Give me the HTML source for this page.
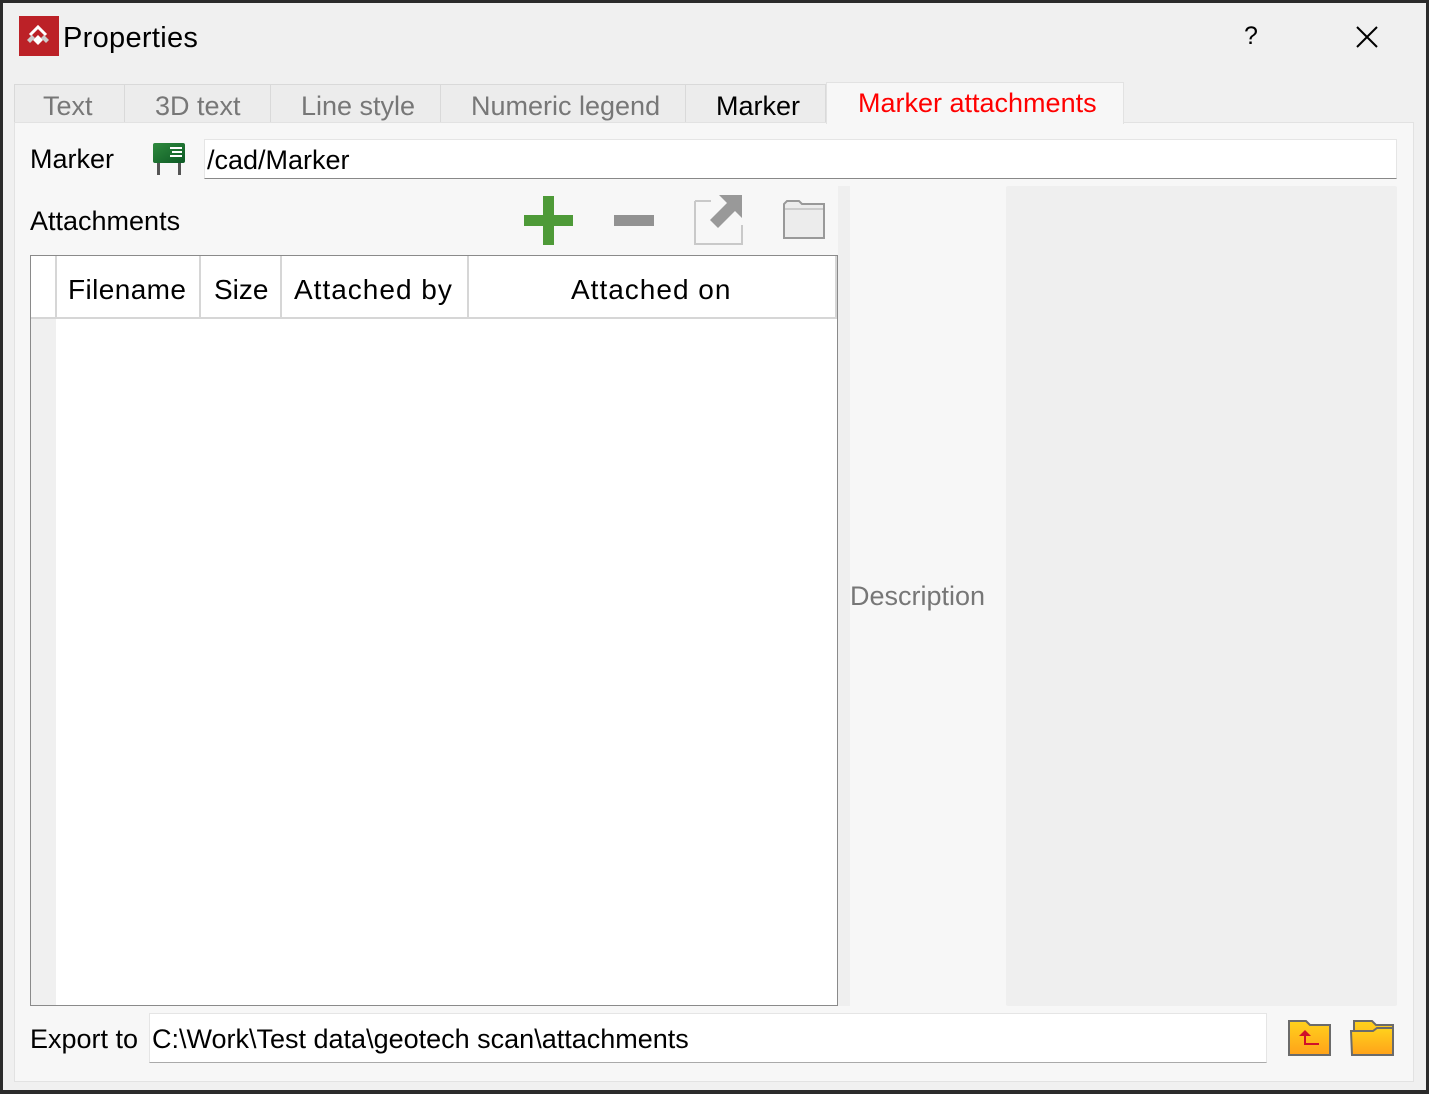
<!DOCTYPE html>
<html><head><meta charset="utf-8"><style>
*{margin:0;padding:0;box-sizing:border-box}
body{width:1429px;height:1094px;background:#2b2b2b;position:relative;overflow:hidden;font-family:"Liberation Sans",sans-serif}
.a{position:absolute}
.t{position:absolute;white-space:nowrap;line-height:1}
</style></head><body>
<div class="a" style="left:3px;top:3px;width:1423px;height:1087px;background:#f0f0f0"></div>
<!-- title -->
<div class="a" style="left:19px;top:16px;width:40px;height:40px;background:#bc2127"></div>
<svg class="a" style="left:19px;top:16px" width="40" height="40"><path d="M11 19 L19 11 L27 19" fill="none" stroke="#fff" stroke-width="3"/><path d="M14 24l5-5 5 5-5 5z" fill="#fff"/><path d="M8 24l5-5 3 3-5 5z" fill="#ccc"/><path d="M22 22l3-3 5 5-3 3z" fill="#ccc"/></svg>
<div class="t" style="left:63px;top:24px;font-size:29px;color:#000;letter-spacing:0.3px">Properties</div>
<div class="t" style="left:1244px;top:24px;font-size:25px;color:#000">?</div>
<svg class="a" style="left:1356px;top:26px" width="22" height="22"><path d="M1 1L21 21M21 1L1 21" stroke="#000" stroke-width="2"/></svg>
<!-- tabs -->
<div class="a" style="left:14px;top:84px;width:812px;height:39px;background:#ececec;border:1px solid #d9d9d9;border-bottom:1px solid #a0a0a0"></div>
<div class="a" style="left:124px;top:85px;width:1px;height:37px;background:#d9d9d9"></div>
<div class="a" style="left:270px;top:85px;width:1px;height:37px;background:#d9d9d9"></div>
<div class="a" style="left:440px;top:85px;width:1px;height:37px;background:#d9d9d9"></div>
<div class="a" style="left:685px;top:85px;width:1px;height:37px;background:#d9d9d9"></div>
<div class="t" style="left:43px;top:93px;font-size:27px;color:#777">Text</div>
<div class="t" style="left:155px;top:93px;font-size:27px;color:#777">3D text</div>
<div class="t" style="left:301px;top:93px;font-size:27px;color:#777">Line style</div>
<div class="t" style="left:471px;top:93px;font-size:27px;color:#777">Numeric legend</div>
<div class="t" style="left:716px;top:93px;font-size:27px;color:#000">Marker</div>
<div class="a" style="left:14px;top:122px;width:1400px;height:960px;background:#f7f7f7;border:1px solid #e2e2e2"></div>
<div class="a" style="left:826px;top:82px;width:298px;height:42px;background:#f7f7f7;border:1px solid #e2e2e2;border-bottom:none"></div>
<div class="t" style="left:858px;top:90px;font-size:27px;color:#ff0000">Marker attachments</div>
<!-- marker row -->
<div class="t" style="left:30px;top:146px;font-size:27px;color:#000">Marker</div>
<svg class="a" style="left:152px;top:143px" width="34" height="32"><defs><linearGradient id="g" x1="0" x2="1" y1="0" y2="1"><stop offset="0" stop-color="#2f8a3e"/><stop offset="1" stop-color="#0d5a25"/></linearGradient></defs><rect x="1" y="0" width="32" height="20" rx="2" fill="url(#g)"/><path d="M18 5h12M20 9h10M18 13h12" stroke="#fff" stroke-width="2"/><rect x="5" y="20" width="3" height="12" fill="#555"/><rect x="26" y="20" width="3" height="12" fill="#555"/></svg>
<div class="a" style="left:204px;top:139px;width:1193px;height:40px;background:#fff;border:1px solid #e5e5e5;border-bottom:1px solid #888"></div>
<div class="t" style="left:207px;top:147px;font-size:27px;color:#000">/cad/Marker</div>
<!-- attachments -->
<div class="t" style="left:30px;top:208px;font-size:27px;color:#000">Attachments</div>
<svg class="a" style="left:524px;top:196px" width="50" height="50"><path d="M19 0h11v19h19v11H30v19H19V30H0V19h19z" fill="#4e9a38"/></svg>
<div class="a" style="left:614px;top:215px;width:40px;height:11px;background:#929292"></div>
<svg class="a" style="left:694px;top:195px" width="50" height="50"><path d="M1 6h16M1 6v43h47V30" stroke="#c9c9c9" stroke-width="2" fill="none"/><path d="M25 0h23v23l-7-7-17 17-8-8 17-17z" fill="#999"/></svg>
<svg class="a" style="left:781px;top:198px" width="46" height="42"><path d="M3 40V6l3-3h12l3 3h22v34z" fill="#ececec" stroke="#999" stroke-width="2"/><path d="M4 11h38" stroke="#ccc" stroke-width="2"/></svg>
<!-- table -->
<div class="a" style="left:30px;top:255px;width:808px;height:751px;background:#fff;border:1px solid #8a8a8a"></div>
<div class="a" style="left:31px;top:256px;width:25px;height:749px;background:#f0f0f0"></div>
<div class="a" style="left:31px;top:256px;width:806px;height:63px;background:#fff;border-bottom:2px solid #d6d6d6"></div>
<div class="a" style="left:55px;top:256px;width:2px;height:63px;background:#d6d6d6"></div>
<div class="a" style="left:199px;top:256px;width:2px;height:63px;background:#d6d6d6"></div>
<div class="a" style="left:280px;top:256px;width:2px;height:63px;background:#d6d6d6"></div>
<div class="a" style="left:467px;top:256px;width:2px;height:63px;background:#d6d6d6"></div>
<div class="a" style="left:835px;top:256px;width:2px;height:63px;background:#d6d6d6"></div>
<div class="t" style="left:68px;top:276px;font-size:28px;color:#000;letter-spacing:0.4px">Filename</div>
<div class="t" style="left:214px;top:276px;font-size:28px;color:#000">Size</div>
<div class="t" style="left:294px;top:276px;font-size:28px;color:#000;letter-spacing:1px">Attached by</div>
<div class="t" style="left:571px;top:276px;font-size:28px;color:#000;letter-spacing:1px">Attached on</div>
<!-- splitter/description -->
<div class="a" style="left:838px;top:186px;width:12px;height:820px;background:#efefef"></div>
<div class="t" style="left:850px;top:583px;font-size:27px;color:#777">Description</div>
<div class="a" style="left:1006px;top:186px;width:391px;height:820px;background:#efefef;border-radius:2px"></div>
<!-- export -->
<div class="t" style="left:30px;top:1026px;font-size:27px;color:#000">Export to</div>
<div class="a" style="left:149px;top:1013px;width:1118px;height:50px;background:#fff;border:1px solid #e5e5e5;border-bottom:1px solid #aaa"></div>
<div class="t" style="left:152px;top:1026px;font-size:27px;color:#000">C:\Work\Test data\geotech scan\attachments</div>
<svg class="a" style="left:1288px;top:1019px" width="44" height="38"><defs><linearGradient id="y" x1="0" x2="0" y1="0" y2="1"><stop offset="0" stop-color="#ffd21c"/><stop offset="1" stop-color="#ffa21a"/></linearGradient></defs><path d="M1 36V2h17l4 4h20v30z" fill="url(#y)" stroke="#6b6b6b" stroke-width="2"/><path d="M17 12v13h14" stroke="#d0102a" stroke-width="2" fill="none"/><path d="M11 17l6-6 6 6z" fill="#d0102a"/></svg>
<svg class="a" style="left:1349px;top:1019px" width="46" height="38"><path d="M5 36V2h18l4 4h17v30z" fill="url(#y)" stroke="#6b6b6b" stroke-width="2"/><path d="M3 36l-1-24h22l4-3h16v27z" fill="url(#y)" stroke="#6b6b6b" stroke-width="2"/></svg>
</body></html>
